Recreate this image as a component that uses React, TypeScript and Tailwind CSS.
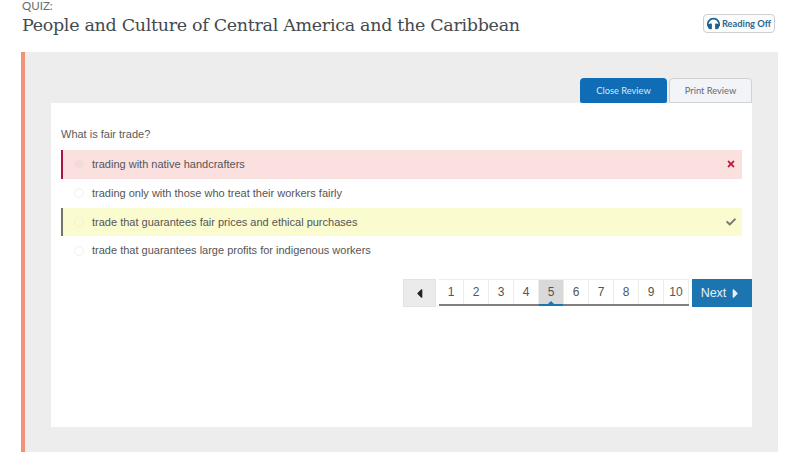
import { FaCaretLeft, FaCaretRight, FaCheck, FaHeadphones, FaTimes } from "react-icons/fa";

const answers = [
  { text: "trading with native handcrafters", state: "wrong" },
  { text: "trading only with those who treat their workers fairly", state: "none" },
  { text: "trade that guarantees fair prices and ethical purchases", state: "right" },
  { text: "trade that guarantees large profits for indigenous workers", state: "none" },
];

const pages = [1, 2, 3, 4, 5, 6, 7, 8, 9, 10];

const App = () => {
  return (
    <div className="w-[800px] h-[472px] bg-white overflow-hidden font-['Liberation_Sans',sans-serif] text-[#555]">
      {/* Header */}
      <div className="h-[52px] pl-[22px] pr-[25px] flex justify-between">
        <div>
          <p className="font-['Lato',sans-serif] text-[11.5px] leading-[13px] text-[#6b6b6b] -mt-[1px]">QUIZ:</p>
          <h1 className="font-['DejaVu_Serif',serif] text-[17.5px] tracking-[-0.31px] leading-[24px] mt-[1px] text-[#444a4d]">
            People and Culture of Central America and the Caribbean
          </h1>
        </div>
        <div className="mt-[14px] w-[72px] h-[19px] flex items-center justify-center gap-[2px] border border-[#ccd0d4] rounded-[4px] font-['Lato',sans-serif] font-bold text-[9.3px] text-[#2f6790] bg-[#fbfcfd]">
          <FaHeadphones className="text-[13px] text-[#1f5f8b]" />
          Reading Off
        </div>
      </div>

      {/* Panel */}
      <div className="ml-[21px] w-[757px] h-[400px] bg-[#ededed] border-l-4 border-[#f0937a] pt-[26px] pl-[26px]">
        <div className="w-[701px] h-[25px] flex justify-end gap-[2px] font-['Lato',sans-serif] text-[9.3px]">
          <div className="w-[87px] flex items-center justify-center bg-[#0f6cb5] text-[#dbe9f4] rounded-t-[4px] rounded-b-[2px]">
            Close Review
          </div>
          <div className="w-[83px] flex items-center justify-center bg-[#f2f4f8] border border-[#cfd2d6] rounded-t-[4px] text-[#666a6e]">
            Print Review
          </div>
        </div>

        {/* Question card */}
        <div className="w-[701px] h-[324px] bg-white pt-[23px] px-[10px]">
          <p className="text-[11px] leading-[15px] mt-[1px] text-[#5a5a5a]">What is fair trade?</p>
          <div className="mt-[8px] flex flex-col">
            {answers.map((answer) => (
              <div
                key={answer.text}
                className={`h-[28.75px] flex items-center text-[11px] border-l-2 ${
                  answer.state === "wrong"
                    ? "bg-[#fbe0e0] border-[#a8163f]"
                    : answer.state === "right"
                      ? "bg-[#fbfbd0] border-[#77756a]"
                      : "border-transparent"
                }`}
              >
                <span
                  className={`ml-[11px] w-[10px] h-[10px] rounded-full border ${
                    answer.state === "wrong"
                      ? "border-[#f8dede] bg-[#f5dada]"
                      : answer.state === "right"
                        ? "border-[#f3f3cc]"
                        : "border-[#f0f0f0]"
                  }`}
                />
                <span className="ml-[8px] flex-1">{answer.text}</span>
                {answer.state === "wrong" && <FaTimes className="mr-[6px] text-[10px] text-[#c21840]" />}
                {answer.state === "right" && <FaCheck className="mr-[6px] text-[10px] text-[#7a7a70]" />}
              </div>
            ))}
          </div>

          {/* Pagination */}
          <div className="mt-[14px] -mr-[10px] flex justify-end items-start">
            <div className="w-[33px] h-[28px] mr-[3px] flex items-center justify-center bg-[#ebebeb] border border-[#e2e2e2] text-[15px] text-[#222]">
              <FaCaretLeft />
            </div>
            <div className="flex border-b-2 border-[#808080]">
              {pages.map((page) => (
                <div
                  key={page}
                  className={`relative w-[25px] h-[25px] flex items-center justify-center text-[12px] border-t border-r border-[#ececec] ${
                    page === 5 ? "bg-[#d9d9d9]" : ""
                  }`}
                >
                  {page}
                  {page === 5 && (
                    <>
                      <span className="absolute left-0 right-0 -bottom-[2px] h-[2px] bg-[#1a75b0]" />
                      <span className="absolute left-1/2 -translate-x-1/2 bottom-0 border-x-[3px] border-b-[3px] border-x-transparent border-b-[#1a75b0]" />
                    </>
                  )}
                </div>
              ))}
            </div>
            <div className="w-[60px] h-[28px] ml-[3px] flex items-center justify-center gap-[2px] bg-[#1a75b0] text-[#e8f1f7] text-[12.5px]">
              Next
              <FaCaretRight className="text-[15px]" />
            </div>
          </div>
        </div>
      </div>
    </div>
  );
};

export default App;
